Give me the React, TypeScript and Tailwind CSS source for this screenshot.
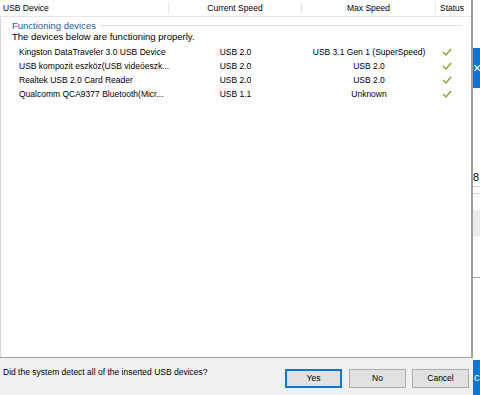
import { Fragment } from "react";

interface Device {
    name: string;
    current: string;
    max: string;
}

const devices: Device[] = [
    { name: "Kingston DataTraveler 3.0 USB Device", current: "USB 2.0", max: "USB 3.1 Gen 1 (SuperSpeed)" },
    { name: "USB kompozit eszköz(USB videóeszk...", current: "USB 2.0", max: "USB 2.0" },
    { name: "Realtek USB 2.0 Card Reader", current: "USB 2.0", max: "USB 2.0" },
    { name: "Qualcomm QCA9377 Bluetooth(Micr...", current: "USB 1.1", max: "Unknown" },
];

function Check() {
    return (
        <svg width="10" height="8" viewBox="0 0 10 8" className="block">
            <path d="M1 4 L4 7 L9 1" fill="none" stroke="#80a832" strokeWidth="1.4" />
        </svg>
    );
}

function Btn({ label, focused, className = "" }: { label: string; focused?: boolean; className?: string }) {
    return (
        <button
            type="button"
            className={
                (focused
                    ? "h-[19px] w-[57px] border-2 border-[#0078d7] bg-[#e1e1e1] text-[8.5px] leading-none text-black "
                    : "h-[19px] w-[57px] border border-[#adadad] bg-[#e1e1e1] text-[8.5px] leading-none text-black ") +
                className
            }
        >
            {label}
        </button>
    );
}

export default function App() {
    const cols = "grid grid-cols-[169px_133px_134px_36px]";

    return (
        <div
            className="flex h-[395px] w-[480px] overflow-hidden bg-[#f0f0f0] text-[8.5px] text-black"
            style={{ fontFamily: '"Liberation Sans", Arial, sans-serif' }}
        >
            <div className="flex w-[473px] flex-col">
                <div className="flex h-[358px] flex-col border-r-2 border-b border-[#a0a0a0] bg-white">
                    <div className={`${cols} h-[17px] items-center border-b border-[#e5e5e5] leading-none`}>
                        <div className="border-r border-[#e5e5e5] py-[2px] pl-[3px]">USB Device</div>
                        <div className="border-r border-[#e5e5e5] py-[2px] text-center">Current Speed</div>
                        <div className="border-r border-[#e5e5e5] py-[2px] text-center">Max Speed</div>
                        <div className="py-[2px] pl-[4px]">Status</div>
                    </div>

                    <div className="flex-1 border-l border-[#d6d6d6]">
                        <div className="mt-[3px] flex items-center pl-[11px] pr-[9px]">
                            <span className="text-[9.5px] leading-[11px] text-[#1e5aa8]">
                                Functioning devices
                            </span>
                            <div className="ml-[4px] h-px flex-1 bg-[#dcdcdc]" />
                        </div>
                        <div className="pl-[11px] text-[9.5px] leading-[11px]">
                            The devices below are functioning properly.
                        </div>

                        <div className={`${cols} mt-[3px] -ml-px auto-rows-[14px] items-center leading-none`}>
                            {devices.map((d) => (
                                <Fragment key={d.name}>
                                    <div className="pl-[19px] whitespace-nowrap">{d.name}</div>
                                    <div className="text-center">{d.current}</div>
                                    <div className="text-center whitespace-nowrap">{d.max}</div>
                                    <div className="pl-[6px]">
                                        <Check />
                                    </div>
                                </Fragment>
                            ))}
                        </div>
                    </div>
                </div>

                <div className="flex flex-1 items-start justify-between pl-[3px] pr-[4px]">
                    <span className="mt-[8px] leading-[12px]">
                        Did the system detect all of the inserted USB devices?
                    </span>
                    <div className="mt-[11px] flex">
                        <Btn label="Yes" focused />
                        <Btn label="No" className="ml-[7px]" />
                        <Btn label="Cancel" className="ml-[6px]" />
                    </div>
                </div>
            </div>

            <div className="flex w-[7px] flex-col bg-white">
                <div className="h-[48px]" />
                <div className="flex h-[40px] items-center overflow-hidden bg-[#0078d7] text-[14px] leading-none text-white">
                    ×
                </div>
                <div className="h-[83px]" />
                <div className="h-[12px] overflow-hidden text-[11px] leading-[12px]">8</div>
                <div className="mt-[3px] h-px bg-[#d0d0d0]" />
                <div className="mt-[6px] h-px bg-[#d0d0d0]" />
                <div className="mt-[16px] h-[27px] bg-[#ececec]" />
                <div className="mt-[40px] h-px bg-[#a0a0a0]" />
                <div className="flex-1" />
                <div className="flex h-[35px] items-center overflow-hidden bg-[#0078d7] pl-[1px] text-[11px] text-white">
                    c
                </div>
            </div>
        </div>
    );
}
